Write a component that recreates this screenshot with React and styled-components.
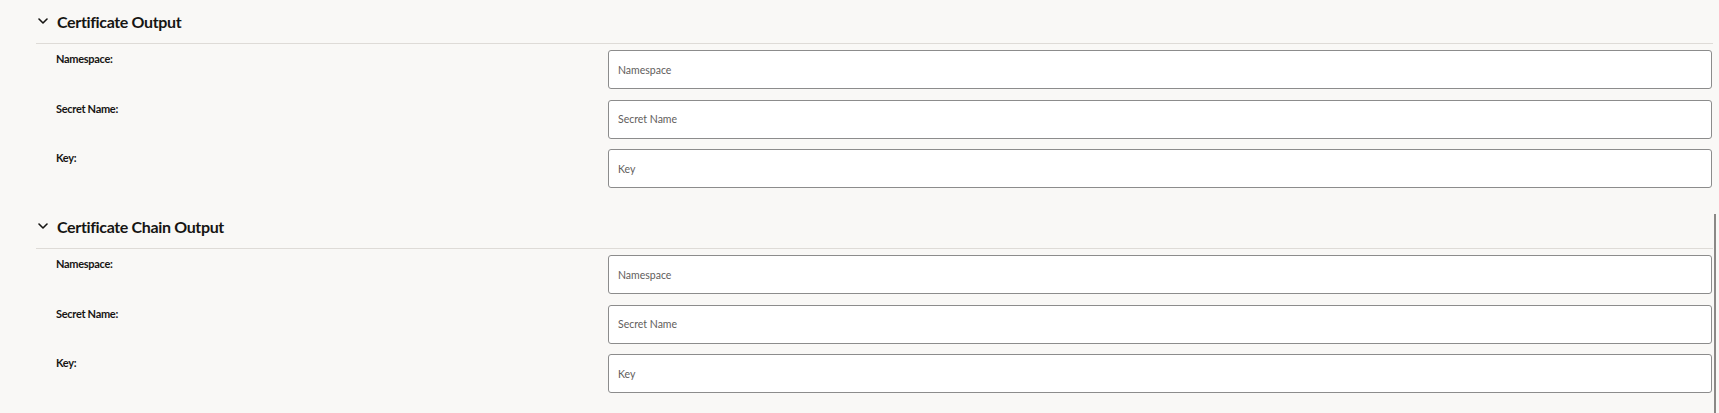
import React from "react";
import styled, { createGlobalStyle } from "styled-components";

const GlobalStyle = createGlobalStyle`
  html, body {
    margin: 0;
    padding: 0;
    background: #f9f8f6;
    font-family: Lato, "Open Sans", sans-serif;
    color: #161513;
  }
`;

const sections = [
  { title: "Certificate Output", fields: ["Namespace", "Secret Name", "Key"] },
  { title: "Certificate Chain Output", fields: ["Namespace", "Secret Name", "Key"] },
];

function Chevron() {
  return (
    <svg width="10" height="6" viewBox="0 0 10 6" fill="none">
      <path d="M1 1l4 4 4-4" stroke="#161513" strokeWidth="1.6" strokeLinecap="round" strokeLinejoin="round" />
    </svg>
  );
}

function Section({ title, fields }) {
  return (
    <SectionBox>
      <Header>
        <Toggle><Chevron /></Toggle>
        <Title>{title}</Title>
      </Header>
      <Rows>
        {fields.map(f => (
          <Row key={f}>
            <Label>{f}:</Label>
            <Input placeholder={f} />
          </Row>
        ))}
      </Rows>
    </SectionBox>
  );
}

export default function App() {
  return (
    <Page>
      <GlobalStyle />
      {sections.map(s => (
        <Section key={s.title} title={s.title} fields={s.fields} />
      ))}
      <ScrollThumb />
    </Page>
  );
}

const Page = styled.div`
  position: relative;
  height: 413px;
  padding: 0 6px 0 36px;
  box-sizing: border-box;
  overflow: hidden;
  display: flex;
  flex-direction: column;
  gap: 17px;
`;

const SectionBox = styled.section`
  display: flex;
  flex-direction: column;
`;

const Header = styled.div`
  height: 43px;
  display: flex;
  align-items: center;
  gap: 9px;
  border-bottom: 1px solid #dedbd7;
`;

const Toggle = styled.span`
  width: 11px;
  display: flex;
  justify-content: center;
  padding-left: 1px;
  margin-bottom: 1px;
`;

const Title = styled.h2`
  margin: 0;
  font-size: 16px;
  font-weight: 700;
  letter-spacing: -0.35px;
`;

const Rows = styled.div`
  display: flex;
  flex-direction: column;
  gap: 10.5px;
  padding: 6px 1px 0 20px;
`;

const Row = styled.div`
  display: grid;
  grid-template-columns: 1fr 2fr;
  align-items: start;
`;

const Label = styled.label`
  font-size: 11px;
  font-weight: 700;
  line-height: 15px;
  padding-top: 1px;
  letter-spacing: -0.3px;
`;

const Input = styled.input`
  height: 39px;
  box-sizing: border-box;
  border: 1px solid #8c8c8c;
  border-radius: 3px;
  background: #fff;
  padding: 0 9px;
  font-family: Lato, "Open Sans", sans-serif;
  font-size: 10.5px;
  color: #161513;
  outline: none;
  &::placeholder {
    color: #5f5e5c;
  }
`;

const ScrollThumb = styled.div`
  position: absolute;
  right: 3px;
  top: 214px;
  bottom: 0;
  width: 2.5px;
  background: #8a8886;
`;
